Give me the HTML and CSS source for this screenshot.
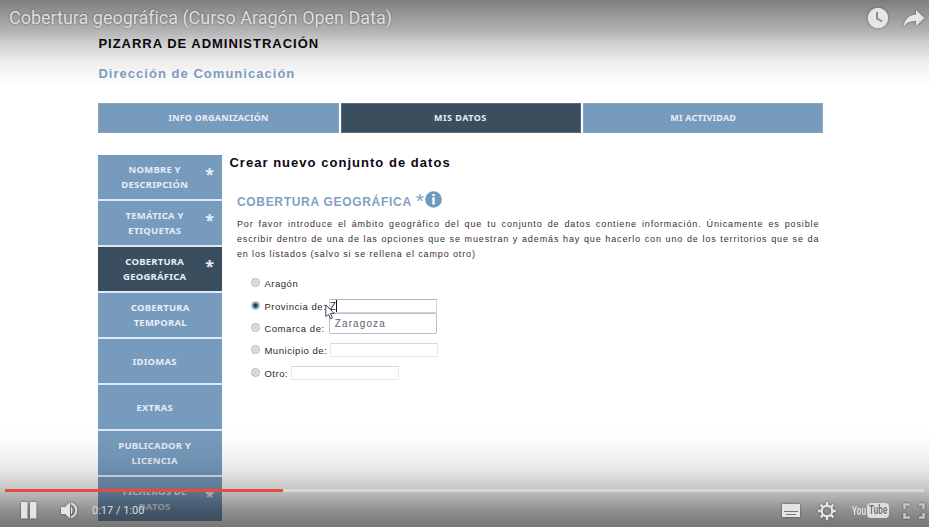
FILE: index.html
```html
<!DOCTYPE html>
<html lang="es">
<head>
<meta charset="utf-8">
<title>Cobertura geográfica (Curso Aragón Open Data)</title>
<link rel="stylesheet" href="styles.css">
</head>
<body>
<div class="player">
  <main class="page">
    <h1 class="board"><span>PIZARRA DE ADMINISTRACIÓN</span></h1>
    <h2 class="dept"><span>Dirección de Comunicación</span></h2>
    <nav class="tabs">
      <a class="tab"><span>INFO ORGANIZACIÓN</span></a>
      <a class="tab active"><span>MIS DATOS</span></a>
      <a class="tab"><span>MI ACTIVIDAD</span></a>
    </nav>
    <div class="columns">
      <aside class="steps">
        <a class="step"><span>NOMBRE Y<br>DESCRIPCIÓN</span><b class="star">*</b></a>
        <a class="step"><span>TEMÁTICA Y<br>ETIQUETAS</span><b class="star">*</b></a>
        <a class="step active"><span>COBERTURA<br>GEOGRÁFICA</span><b class="star">*</b></a>
        <a class="step wide"><span>COBERTURA<br>TEMPORAL</span></a>
        <a class="step"><span>IDIOMAS</span></a>
        <a class="step"><span>EXTRAS</span></a>
        <a class="step"><span>PUBLICADOR Y<br>LICENCIA</span></a>
        <a class="step"><span>FICHEROS DE<br>DATOS</span><b class="star">*</b></a>
      </aside>
      <section class="content">
        <h3 class="create"><span>Crear nuevo conjunto de datos</span></h3>
        <h4 class="section"><span class="section-name">COBERTURA GEOGRÁFICA</span><span class="req">*</span>
          <svg class="info" viewBox="0 0 17 17"><circle cx="8.5" cy="8.5" r="8.3" fill="#6f9abd"/><path d="M7.300 3h2.400v2H7.300zM7.300 6.300h2.400V13.500H7.300z" fill="#fff"/></svg>
        </h4>
        <div class="help">
          <p>Por favor introduce el ámbito geográfico del que tu conjunto de datos contiene información. Únicamente es posible</p>
          <p>escribir dentro de una de las opciones que se muestran y además hay que hacerlo con uno de los territorios que se da</p>
          <p class="last">en los listados (salvo si se rellena el campo otro)</p>
        </div>
        <div class="options">
          <div class="option"><i class="radio"></i><span>Aragón</span></div>
          <div class="option"><i class="radio on"></i><span>Provincia de:</span>
            <div class="field focus"><span class="typed">Z</span><div class="suggest">Zaragoza</div>
              <svg class="cursor" viewBox="0 0 10 16"><path d="M.8.9v11.8l2.7-2.4 2.1 4.5 1.9-.9-2-4.3h3.7z" fill="#fff" stroke="#4c4252"/></svg>
            </div></div>
          <div class="option"><i class="radio"></i><span>Comarca de:</span></div>
          <div class="option"><i class="radio"></i><span>Municipio de:</span><div class="field"></div></div>
          <div class="option"><i class="radio"></i><span>Otro:</span><div class="field"></div></div>
        </div>
      </section>
    </div>
  </main>

  <header class="overlay-top">
    <span class="video-title">Cobertura geográfica (Curso Aragón Open Data)</span>
    <svg class="ico later" viewBox="0 0 22 22"><circle cx="11" cy="11" r="10.3" fill="#e6e6e6"/><path d="M10 5v6.5l5.2 3" fill="none" stroke="#8c8c8c" stroke-width="2"/></svg>
    <svg class="ico share" viewBox="0 0 22 20"><path d="M13 1l8.5 8L13 17v-5C7 12 3 14 .5 18 1.500 10 6 6 13 5.500z" fill="#e6e6e6"/></svg>
  </header>

  <footer class="overlay-bottom">
    <div class="progress"><div class="played"></div></div>
    <div class="controls">
      <svg class="ico pause" viewBox="0 0 16 17"><path d="M0 0h6.500v16.500H0zM9 0h6.500v16.500H9z" fill="#e4e4e4"/></svg>
      <svg class="ico volume" viewBox="0 0 17 17"><path d="M0 5h4l5-5v16.500L4 12H0z" fill="#e4e4e4"/><path d="M10 4.500q3 4-0 8z" fill="#e4e4e4"/><path d="M10 1.300a7.300 7.300 0 0 1 0 14" fill="none" stroke="#e4e4e4" stroke-width="1.900"/></svg>
      <span class="time">0:17 / 1:00</span>
      <svg class="ico captions" viewBox="0 0 18 13"><path d="M0 0h18v13H0z" fill="#e4e4e4"/><path d="M2 7.500h14M4 10.500h10" stroke="#777"/></svg>
      <svg class="ico gear" viewBox="-9 -9 18 18"><circle r="5.300" fill="none" stroke="#e4e4e4" stroke-width="2.400"/><g stroke="#e4e4e4" stroke-width="2.400"><path d="M0-9v3M0 9V6M-9 0h3M9 0H6M-6.400-6.400l2.200 2.200M6.400 6.400L4.200 4.200M-6.400 6.400l2.200-2.200M6.400-6.400L4.200-4.200"/></g></svg>
      <span class="youtube"><span class="you">You</span><span class="tube"><span>Tube</span></span></span>
      <svg class="ico full" viewBox="0 0 22 16"><path d="M1.500 6V1.500H7M16 1.500h4.500V6M20.500 10v4.500H16M7 14.500H1.500V10" fill="none" stroke="#c6c6c6" stroke-width="2.600"/></svg>
    </div>
  </footer>
</div>
</body>
</html>
```

FILE: styles.css
```css
* { box-sizing: border-box; }
body { margin: 0; background: #fff; }
h1, h2, h3, h4, p { margin: 0; }
.player {
  position: relative;
  width: 929px;
  height: 527px;
  overflow: hidden;
  font-family: "Liberation Sans", Arial, sans-serif;
  background: #fff;
}
.page { width: 823.4px; padding: 34px 0 0 98.4px; }
.board { height: 20px; line-height: 20px; font-size: 13px; letter-spacing: .98px; color: #0c0810; white-space: nowrap; }
.dept { height: 20px; margin-top: 10px; line-height: 20px; font-size: 13px; letter-spacing: 1.03px; color: #829fc2; }
.tabs { display: grid; grid-template-columns: repeat(3, 1fr); gap: 2px; height: 30px; margin-top: 19px; }
.tab, .step {
  display: flex;
  align-items: center;
  justify-content: center;
  background: #779bbd;
  color: #e6edfa;
  font-family: "Noto Sans", sans-serif;
  font-weight: 700;
}
.tab { font-size: 9px; letter-spacing: .2px; border: 1px solid #88a5c5; padding-bottom: 1px; }
.tab.active { letter-spacing: .5px; padding-right: 1px; }
.tab.active, .step.active { background: #3b4e5e; border-color: #586b7d; }
.columns { display: flex; margin-top: 22.4px; }
.steps { display: flex; flex-direction: column; gap: 2px; width: 123.6px; background: #dfe7fa; }
.step { position: relative; height: 44px; font-size: 9.5px; line-height: 15px; letter-spacing: .22px; text-align: center; padding-right: 11px; }
.step.wide { padding-right: 0; }
.star { position: absolute; right: 8px; top: 9px; font: 700 16px/20px "Open Sans", sans-serif; letter-spacing: 0; }
.content { flex: 1; padding-left: 7.4px; }
.create { height: 16px; line-height: 16px; font-size: 13px; letter-spacing: 1.03px; color: #0c0810; }
.section { display: flex; height: 20px; margin: 19px 0 0 7.5px; align-items: center; font-size: 12px; color: #829fc2; }
.section-name { letter-spacing: .7px; padding-top: 4px; }
.req { font-size: 21px; line-height: 22px; height: 20px; margin-left: 4px; font-weight: 400; }
.info { width: 17px; height: 17px; margin: -1px 0 0 1px; }
.help { width: 582.5px; margin: 6.400px 0 0 7.5px; font-size: 9px; line-height: 15px; letter-spacing: .88px; color: #3d2b3e; }
.help p { height: 15px; white-space: nowrap; text-align: justify; text-align-last: justify; }
.help .last { text-align-last: left; }
.options { margin: 11px 0 0 22px; }
.option { display: flex; align-items: center; height: 22.3px; font-size: 9.5px; letter-spacing: .54px; color: #2f2632; white-space: nowrap; }
.radio { width: 9px; height: 9px; margin: -2px 4px 0 0; border: 1px solid #b5aeb8; border-radius: 50%; background: radial-gradient(#cfcbd0, #f2f2f2); }
.radio.on { background: radial-gradient(#173f5c 0 25%, #5690ad 50%, #e9edf2 80%); }
.field { position: relative; width: 108px; height: 14px; margin: -1px 0 0 3px; border: 1px solid #efe4f3; border-top-color: #dccfe0; }
.field.focus { margin-left: 2.500px; border-color: #a1b8d3 #c7d8e8 #c7d8e8; }
.typed { display: block; width: 7px; height: 12px; font-size: 10px; line-height: 13px; border-right: 1px solid #111; }
.suggest { position: absolute; z-index: 1; left: -1px; top: 13px; width: 108px; height: 21px; padding-left: 5px; border: 1px solid #c9b5cc; border-radius: 2px; background: #fff; font-size: 10px; line-height: 19px; letter-spacing: 1.1px; color: #665c6c; }
.cursor { position: absolute; z-index: 2; left: -5px; top: 4px; width: 10px; height: 16px; }

.overlay-top {
  position: absolute; z-index: 3; left: 0; top: 0; width: 100%; height: 90px;
  display: flex; align-items: flex-start; padding: 7px 4px 0 9px;
  background: linear-gradient(rgba(0,0,0,.51) 0, rgba(0,0,0,.42) 14%, rgba(0,0,0,.31) 33%, rgba(0,0,0,.19) 48%, rgba(0,0,0,.08) 67%, rgba(0,0,0,.02) 86%, transparent);
}
.video-title { flex: 1; font: 400 18px/22px Roboto, sans-serif; letter-spacing: -.02px; color: #e0e0e0; text-shadow: 0 0 2px rgba(0,0,0,.5); }
.ico { display: block; flex: none; filter: drop-shadow(0 0 1px rgba(0,0,0,.5)); }
.later { width: 22px; height: 22px; margin-right: 14px; }
.share { width: 22px; height: 20px; margin-top: 2px; }
.overlay-bottom {
  position: absolute; z-index: 3; left: 0; bottom: 0; width: 100%; height: 107px; padding: 69px 5px 0;
  background: linear-gradient(transparent, rgba(0,0,0,.01) 18%, rgba(0,0,0,.05) 35%, rgba(0,0,0,.1) 47%, rgba(0,0,0,.21) 63%, rgba(0,0,0,.29) 70%, rgba(0,0,0,.43) 84%, rgba(0,0,0,.54));
}
.progress { height: 3px; background: #d8d8d8; }
.played { width: 278px; height: 3px; background: #e9493f; }
.controls { display: flex; align-items: center; height: 35px; padding: 2px 0 0 16px; }
.pause { width: 16px; height: 17px; }
.volume { width: 17px; height: 17px; margin-left: 24px; }
.time { flex: 1; margin-left: 14px; font: 11px/16px Roboto, sans-serif; color: #ddd; }
.captions { width: 18px; height: 13px; margin-right: 18px; }
.gear { width: 18px; height: 18px; margin-right: 16px; }
.youtube { display: flex; align-items: center; width: 37px; height: 16px; margin-right: 14px; font: 700 12px/16px Roboto, sans-serif; color: #ddd; }
.you { width: 15px; transform: scaleX(.68); transform-origin: left; }
.tube { width: 22px; height: 15px; line-height: 15px; padding-left: 2px; border-radius: 4px; background: #ddd; color: #777; flex: none; }
.tube span { display: block; width: 28px; transform: scaleX(.68); transform-origin: left; }
.full { width: 22px; height: 16px; margin-right: -1px; }
```
